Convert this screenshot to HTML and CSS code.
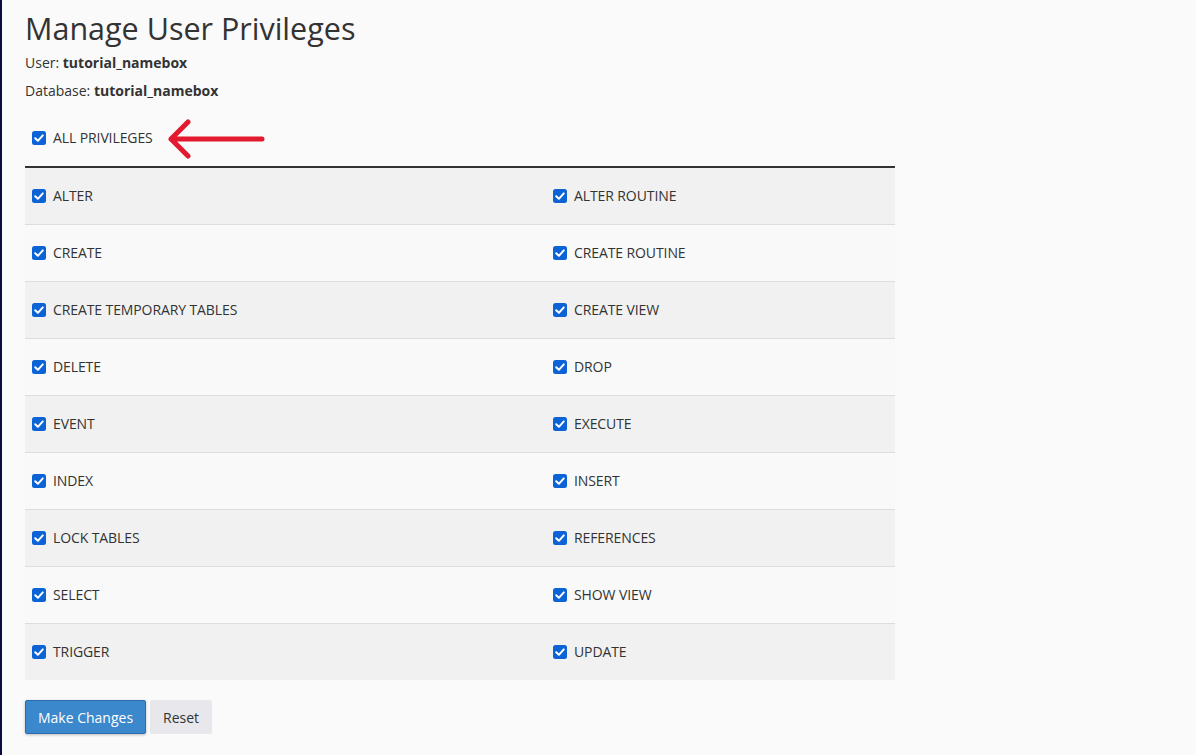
FILE: index.html
```html
<!DOCTYPE html>
<html>
<head>
<meta charset="utf-8">
<link rel="stylesheet" href="styles.css">
</head>
<body>
<div class="page">
  <h1 class="title">Manage User Privileges</h1>
  <p class="meta">User: <b>tutorial_namebox</b></p>
  <p class="meta">Database: <b>tutorial_namebox</b></p>
  <div class="all-row">
    <label class="check"><span class="box"><svg viewBox="0 0 14 14" width="14" height="14"><rect x="0" y="0" width="14" height="14" rx="2.5" fill="#0b63d6"/><path d="M3.2 7.2 L5.9 9.8 L10.8 4.4" fill="none" stroke="#fff" stroke-width="2" stroke-linecap="round" stroke-linejoin="round"/></svg></span>ALL PRIVILEGES</label>
    <svg class="arrow" width="100" height="42" viewBox="0 0 100 42"><path d="M96 21 H5 M22 4 L5 21 L22 38" fill="none" stroke="#e2192f" stroke-width="5" stroke-linecap="round" stroke-linejoin="round"/></svg>
  </div>
  <div class="table">
    <div class="row odd"><label class="check"><span class="box"><svg viewBox="0 0 14 14" width="14" height="14"><rect width="14" height="14" rx="2.5" fill="#0b63d6"/><path d="M3.2 7.2 L5.9 9.8 L10.8 4.4" fill="none" stroke="#fff" stroke-width="2" stroke-linecap="round" stroke-linejoin="round"/></svg></span>ALTER</label><label class="check"><span class="box"><svg viewBox="0 0 14 14" width="14" height="14"><rect width="14" height="14" rx="2.5" fill="#0b63d6"/><path d="M3.2 7.2 L5.9 9.8 L10.8 4.4" fill="none" stroke="#fff" stroke-width="2" stroke-linecap="round" stroke-linejoin="round"/></svg></span>ALTER ROUTINE</label></div>
    <div class="row even"><label class="check"><span class="box"><svg viewBox="0 0 14 14" width="14" height="14"><rect width="14" height="14" rx="2.5" fill="#0b63d6"/><path d="M3.2 7.2 L5.9 9.8 L10.8 4.4" fill="none" stroke="#fff" stroke-width="2" stroke-linecap="round" stroke-linejoin="round"/></svg></span>CREATE</label><label class="check"><span class="box"><svg viewBox="0 0 14 14" width="14" height="14"><rect width="14" height="14" rx="2.5" fill="#0b63d6"/><path d="M3.2 7.2 L5.9 9.8 L10.8 4.4" fill="none" stroke="#fff" stroke-width="2" stroke-linecap="round" stroke-linejoin="round"/></svg></span>CREATE ROUTINE</label></div>
    <div class="row odd"><label class="check"><span class="box"><svg viewBox="0 0 14 14" width="14" height="14"><rect width="14" height="14" rx="2.5" fill="#0b63d6"/><path d="M3.2 7.2 L5.9 9.8 L10.8 4.4" fill="none" stroke="#fff" stroke-width="2" stroke-linecap="round" stroke-linejoin="round"/></svg></span>CREATE TEMPORARY TABLES</label><label class="check"><span class="box"><svg viewBox="0 0 14 14" width="14" height="14"><rect width="14" height="14" rx="2.5" fill="#0b63d6"/><path d="M3.2 7.2 L5.9 9.8 L10.8 4.4" fill="none" stroke="#fff" stroke-width="2" stroke-linecap="round" stroke-linejoin="round"/></svg></span>CREATE VIEW</label></div>
    <div class="row even"><label class="check"><span class="box"><svg viewBox="0 0 14 14" width="14" height="14"><rect width="14" height="14" rx="2.5" fill="#0b63d6"/><path d="M3.2 7.2 L5.9 9.8 L10.8 4.4" fill="none" stroke="#fff" stroke-width="2" stroke-linecap="round" stroke-linejoin="round"/></svg></span>DELETE</label><label class="check"><span class="box"><svg viewBox="0 0 14 14" width="14" height="14"><rect width="14" height="14" rx="2.5" fill="#0b63d6"/><path d="M3.2 7.2 L5.9 9.8 L10.8 4.4" fill="none" stroke="#fff" stroke-width="2" stroke-linecap="round" stroke-linejoin="round"/></svg></span>DROP</label></div>
    <div class="row odd"><label class="check"><span class="box"><svg viewBox="0 0 14 14" width="14" height="14"><rect width="14" height="14" rx="2.5" fill="#0b63d6"/><path d="M3.2 7.2 L5.9 9.8 L10.8 4.4" fill="none" stroke="#fff" stroke-width="2" stroke-linecap="round" stroke-linejoin="round"/></svg></span>EVENT</label><label class="check"><span class="box"><svg viewBox="0 0 14 14" width="14" height="14"><rect width="14" height="14" rx="2.5" fill="#0b63d6"/><path d="M3.2 7.2 L5.9 9.8 L10.8 4.4" fill="none" stroke="#fff" stroke-width="2" stroke-linecap="round" stroke-linejoin="round"/></svg></span>EXECUTE</label></div>
    <div class="row even"><label class="check"><span class="box"><svg viewBox="0 0 14 14" width="14" height="14"><rect width="14" height="14" rx="2.5" fill="#0b63d6"/><path d="M3.2 7.2 L5.9 9.8 L10.8 4.4" fill="none" stroke="#fff" stroke-width="2" stroke-linecap="round" stroke-linejoin="round"/></svg></span>INDEX</label><label class="check"><span class="box"><svg viewBox="0 0 14 14" width="14" height="14"><rect width="14" height="14" rx="2.5" fill="#0b63d6"/><path d="M3.2 7.2 L5.9 9.8 L10.8 4.4" fill="none" stroke="#fff" stroke-width="2" stroke-linecap="round" stroke-linejoin="round"/></svg></span>INSERT</label></div>
    <div class="row odd"><label class="check"><span class="box"><svg viewBox="0 0 14 14" width="14" height="14"><rect width="14" height="14" rx="2.5" fill="#0b63d6"/><path d="M3.2 7.2 L5.9 9.8 L10.8 4.4" fill="none" stroke="#fff" stroke-width="2" stroke-linecap="round" stroke-linejoin="round"/></svg></span>LOCK TABLES</label><label class="check"><span class="box"><svg viewBox="0 0 14 14" width="14" height="14"><rect width="14" height="14" rx="2.5" fill="#0b63d6"/><path d="M3.2 7.2 L5.9 9.8 L10.8 4.4" fill="none" stroke="#fff" stroke-width="2" stroke-linecap="round" stroke-linejoin="round"/></svg></span>REFERENCES</label></div>
    <div class="row even"><label class="check"><span class="box"><svg viewBox="0 0 14 14" width="14" height="14"><rect width="14" height="14" rx="2.5" fill="#0b63d6"/><path d="M3.2 7.2 L5.9 9.8 L10.8 4.4" fill="none" stroke="#fff" stroke-width="2" stroke-linecap="round" stroke-linejoin="round"/></svg></span>SELECT</label><label class="check"><span class="box"><svg viewBox="0 0 14 14" width="14" height="14"><rect width="14" height="14" rx="2.5" fill="#0b63d6"/><path d="M3.2 7.2 L5.9 9.8 L10.8 4.4" fill="none" stroke="#fff" stroke-width="2" stroke-linecap="round" stroke-linejoin="round"/></svg></span>SHOW VIEW</label></div>
    <div class="row odd last"><label class="check"><span class="box"><svg viewBox="0 0 14 14" width="14" height="14"><rect width="14" height="14" rx="2.5" fill="#0b63d6"/><path d="M3.2 7.2 L5.9 9.8 L10.8 4.4" fill="none" stroke="#fff" stroke-width="2" stroke-linecap="round" stroke-linejoin="round"/></svg></span>TRIGGER</label><label class="check"><span class="box"><svg viewBox="0 0 14 14" width="14" height="14"><rect width="14" height="14" rx="2.5" fill="#0b63d6"/><path d="M3.2 7.2 L5.9 9.8 L10.8 4.4" fill="none" stroke="#fff" stroke-width="2" stroke-linecap="round" stroke-linejoin="round"/></svg></span>UPDATE</label></div>
  </div>
  <div class="actions">
    <button class="btn primary">Make Changes</button>
    <button class="btn plain">Reset</button>
  </div>
</div>
</body>
</html>
```

FILE: styles.css
```css
html, body {
  margin: 0;
  padding: 0;
  background: #fafafa;
}
body {
  font-family: "Open Sans", "Noto Sans", sans-serif;
  color: #333;
  font-size: 14px;
  min-height: 755px;
  border-left: 2px solid #0c0b3f;
  box-sizing: border-box;
}
.page {
  padding: 7px 0 0 23px;
  width: 870px;
}
.title {
  margin: 0;
  font-size: 30.5px;
  font-weight: 400;
  line-height: 42px;
  color: #333;
}
.meta {
  margin: 0;
  line-height: 28px;
  font-size: 14px;
}
.meta b {
  font-weight: 700;
}
.all-row {
  display: flex;
  align-items: center;
  height: 44px;
  margin-top: 11px;
  padding-left: 7px;
  gap: 13px;
}
.arrow {
  display: block;
  margin-top: 1px;
}
.check {
  display: flex;
  align-items: center;
  gap: 7px;
  font-size: 14px;
  line-height: 20px;
  color: #333;
  letter-spacing: -0.1px;
}
.box {
  display: block;
  width: 14px;
  height: 14px;
}
.box svg {
  display: block;
}
.table {
  margin-top: 6px;
  border-top: 2px solid #333;
}
.row {
  display: grid;
  grid-template-columns: 521px 349px;
  height: 56px;
  align-items: center;
  border-bottom: 1px solid #dddddd;
}
.row .check {
  padding-left: 7px;
}
.row.odd {
  background: #f1f1f1;
}
.row.even {
  background: #f9f9f9;
}
.row.last {
  border-bottom: none;
}
.actions {
  display: flex;
  gap: 4px;
  margin-top: 20px;
}
.btn {
  font-family: "Open Sans", "Noto Sans", sans-serif;
  font-size: 14px;
  height: 34px;
  border-radius: 2px;
  cursor: pointer;
  white-space: nowrap;
  padding-bottom: 1px;
}
.primary {
  background: #3b88cd;
  color: #fff;
  border: 1px solid #2c6ead;
  padding-left: 0;
  padding-right: 0;
  width: 121px;
  box-shadow: 0 1px 3px rgba(0,0,0,0.25);
}
.plain {
  background: #e8e8ec;
  color: #333;
  border: 1px solid #e8e8ec;
  width: 62px;
  padding-left: 0;
  padding-right: 0;
}
```
